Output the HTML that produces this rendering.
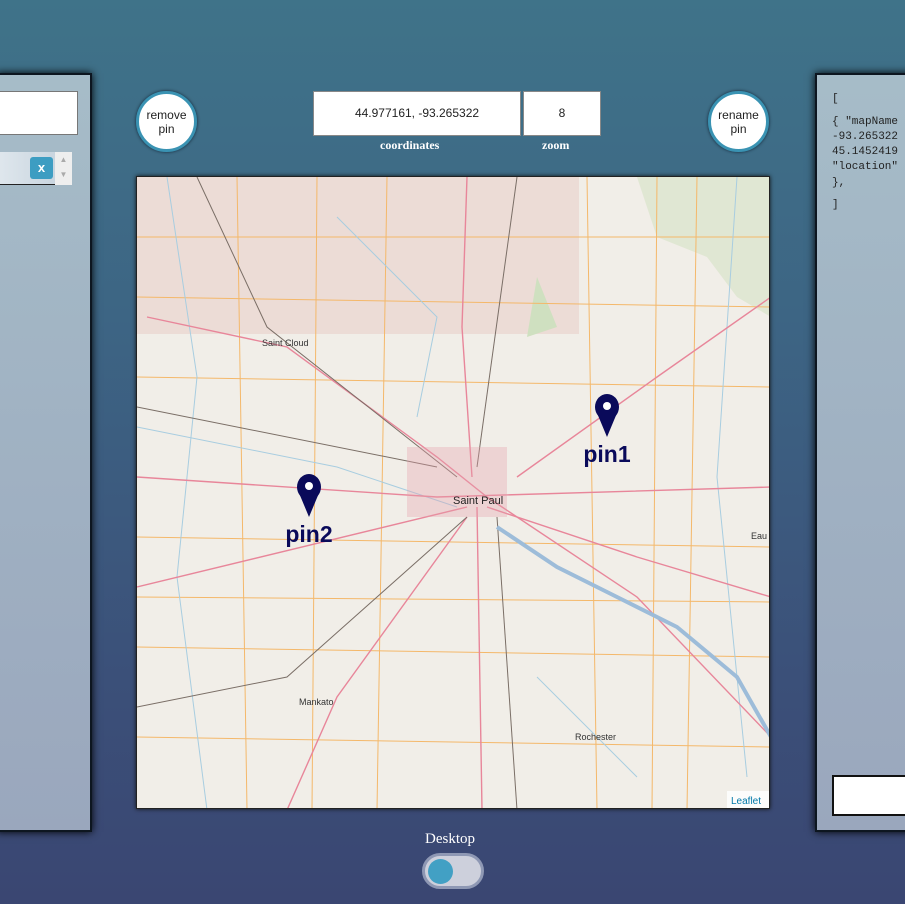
<!DOCTYPE html>
<html><head><style>
*{margin:0;padding:0;box-sizing:border-box}
body{width:905px;height:904px;overflow:hidden;background:linear-gradient(180deg,#3f7389 0%,#3d6584 35%,#3b5079 75%,#3a4672 100%);font-family:"Liberation Sans",sans-serif;position:relative}
.panel{position:absolute;top:73px;height:759px;background:linear-gradient(180deg,#a6bcc8,#9aa7bd);border:2px solid #0d1620;box-shadow:0 0 8px #000}
.circ{position:absolute;width:61px;height:61px;border-radius:50%;background:#fff;border:3px solid #3a93b3;box-shadow:0 0 3px #123;font-size:12px;color:#222;text-align:center;line-height:14px;padding-top:14px}
.inp{position:absolute;background:#fff;border:1px solid #888;font-size:12px;color:#222;text-align:center}
.lbl{position:absolute;font-family:"Liberation Serif",serif;font-weight:bold;color:#fff;font-size:12px}
.m{position:absolute;left:15px;font-family:'Liberation Mono',monospace;font-size:11px;color:#222;white-space:pre}
</style></head><body>
<div class="panel" style="left:-4px;width:96px">
 <div style="position:absolute;left:0;top:16px;width:80px;height:44px;background:#fff;border:1px solid #777"></div>
 <div style="position:absolute;left:0;top:77px;width:57px;height:33px;background:linear-gradient(90deg,#dfe7ed,#c9d5df);border-bottom:1px solid #222"></div>
 <div style="position:absolute;left:32px;top:82px;width:23px;height:22px;background:#3d9dc2;border-radius:3px;color:#fff;font-weight:bold;font-size:13px;text-align:center;line-height:21px">x</div>
 <div style="position:absolute;left:57px;top:77px;width:17px;height:33px;background:#eee;color:#aaa;font-size:8px;text-align:center;line-height:15px">▲<br>▼</div>
</div>
<div class="panel" style="left:815px;width:100px">
 <div class="m" style="top:18px">[</div>
 <div class="m" style="top:41px">{ "mapName</div>
 <div class="m" style="top:56px">-93.265322</div>
 <div class="m" style="top:71px">45.1452419</div>
 <div class="m" style="top:86px">"location"</div>
 <div class="m" style="top:102px">},</div>
 <div class="m" style="top:124px">]</div>
 <div style="position:absolute;left:15px;top:700px;width:90px;height:41px;background:#fff;border:2px solid #111"></div>
</div>
<div class="circ" style="left:136px;top:91px">remove<br>pin</div>
<div class="circ" style="left:708px;top:91px">rename<br>pin</div>
<div class="inp" style="left:313px;top:91px;width:208px;height:45px;line-height:43px">44.977161, -93.265322</div>
<div class="inp" style="left:523px;top:91px;width:78px;height:45px;line-height:43px">8</div>
<div class="lbl" style="left:380px;top:138px">coordinates</div>
<div class="lbl" style="left:542px;top:138px">zoom</div>
<div style="position:absolute;left:136px;top:176px;width:634px;height:633px;background:#f1eee8;border:1px solid #222;box-shadow:0 0 4px #111;overflow:hidden">
<svg width="634" height="633" style="position:absolute;left:0;top:0">
<rect x="0" y="0" width="442" height="157" fill="#ecdcd6"/>
<path d="M500 0 L634 0 L634 140 L600 120 L570 80 L520 60Z" fill="#d5e3c4" opacity=".6"/>
<path d="M400 100 L420 150 L390 160 Z" fill="#cfe0c0"/>
<g fill="none" stroke="#f4b86a" stroke-width="1">
<path d="M0 60 L634 60"/><path d="M0 200 L634 210"/><path d="M0 360 L634 370"/><path d="M0 470 L634 480"/><path d="M0 560 L634 570"/>
<path d="M100 0 L110 633"/><path d="M250 0 L240 633"/><path d="M450 0 L460 633"/><path d="M560 0 L550 633"/>
<path d="M180 0 L175 633"/><path d="M520 0 L515 633"/><path d="M0 120 L634 130"/><path d="M0 420 L634 425"/>
</g>
<g fill="none" stroke="#a8cde0" stroke-width="1">
<path d="M0 250 L200 290 L320 330"/><path d="M30 0 L60 200 L40 400 L70 633"/><path d="M600 0 L580 300 L610 600"/><path d="M200 40 L300 140 L280 240"/><path d="M400 500 L500 600"/>
</g>
<g fill="none" stroke="#e8869a" stroke-width="1.4">
<path d="M10 140 L150 170 L300 280 L350 320"/><path d="M330 0 L325 150 L335 300"/><path d="M0 300 L300 320 L634 310"/>
<path d="M350 320 L500 420 L634 560"/><path d="M330 340 L200 520 L150 633"/><path d="M340 330 L345 633"/>
<path d="M380 300 L520 200 L634 120"/><path d="M350 330 L500 380 L634 420"/><path d="M0 410 L330 330"/>
</g>
<g fill="none" stroke="#7a6e66" stroke-width="1">
<path d="M60 0 L130 150 L320 300"/><path d="M380 0 L340 290"/><path d="M0 530 L150 500 L330 340"/><path d="M360 340 L380 633"/><path d="M0 230 L300 290"/>
</g>
<path d="M360 350 L420 390 L480 420 L540 450 L600 500 L634 560" fill="none" stroke="#9dbcd9" stroke-width="4"/>
<rect x="270" y="270" width="100" height="70" fill="#e6a0ad" opacity=".35"/>
<text x="125" y="169" font-size="9" fill="#333" font-family="Liberation Sans">Saint Cloud</text>
<text x="316" y="327" font-size="11" fill="#222" font-family="Liberation Sans">Saint Paul</text>
<text x="162" y="528" font-size="9" fill="#333" font-family="Liberation Sans">Mankato</text>
<text x="438" y="563" font-size="9" fill="#333" font-family="Liberation Sans">Rochester</text>
<text x="614" y="362" font-size="9" fill="#333" font-family="Liberation Sans">Eau</text>
<g transform="translate(470,218)"><ellipse cx="0" cy="12" rx="12" ry="13" fill="#0a0a5a"/><path d="M-10 18 L0 42 L10 18Z" fill="#0a0a5a"/><circle cx="0" cy="11" r="4" fill="#fff"/></g>
<text x="470" y="285" font-size="23" font-weight="bold" fill="#0a0a5a" text-anchor="middle" font-family="Liberation Sans">pin1</text>
<g transform="translate(172,298)"><ellipse cx="0" cy="12" rx="12" ry="13" fill="#0a0a5a"/><path d="M-10 18 L0 42 L10 18Z" fill="#0a0a5a"/><circle cx="0" cy="11" r="4" fill="#fff"/></g>
<text x="172" y="365" font-size="23" font-weight="bold" fill="#0a0a5a" text-anchor="middle" font-family="Liberation Sans">pin2</text>
<rect x="590" y="614" width="44" height="19" fill="#fff" opacity=".8"/>
<text x="594" y="627" font-size="10" fill="#0078a8" font-family="Liberation Sans">Leaflet</text>
</svg></div>
<div style="position:absolute;left:425px;top:831px;font-family:'Liberation Serif',serif;font-size:15px;color:#fff">Desktop</div>
<div style="position:absolute;left:422px;top:853px;width:62px;height:36px;border-radius:18px;background:#cdd0dc;border:3px solid #8e98b4"></div>
<div style="position:absolute;left:428px;top:859px;width:25px;height:25px;border-radius:50%;background:#42a0c4"></div>
</body></html>
